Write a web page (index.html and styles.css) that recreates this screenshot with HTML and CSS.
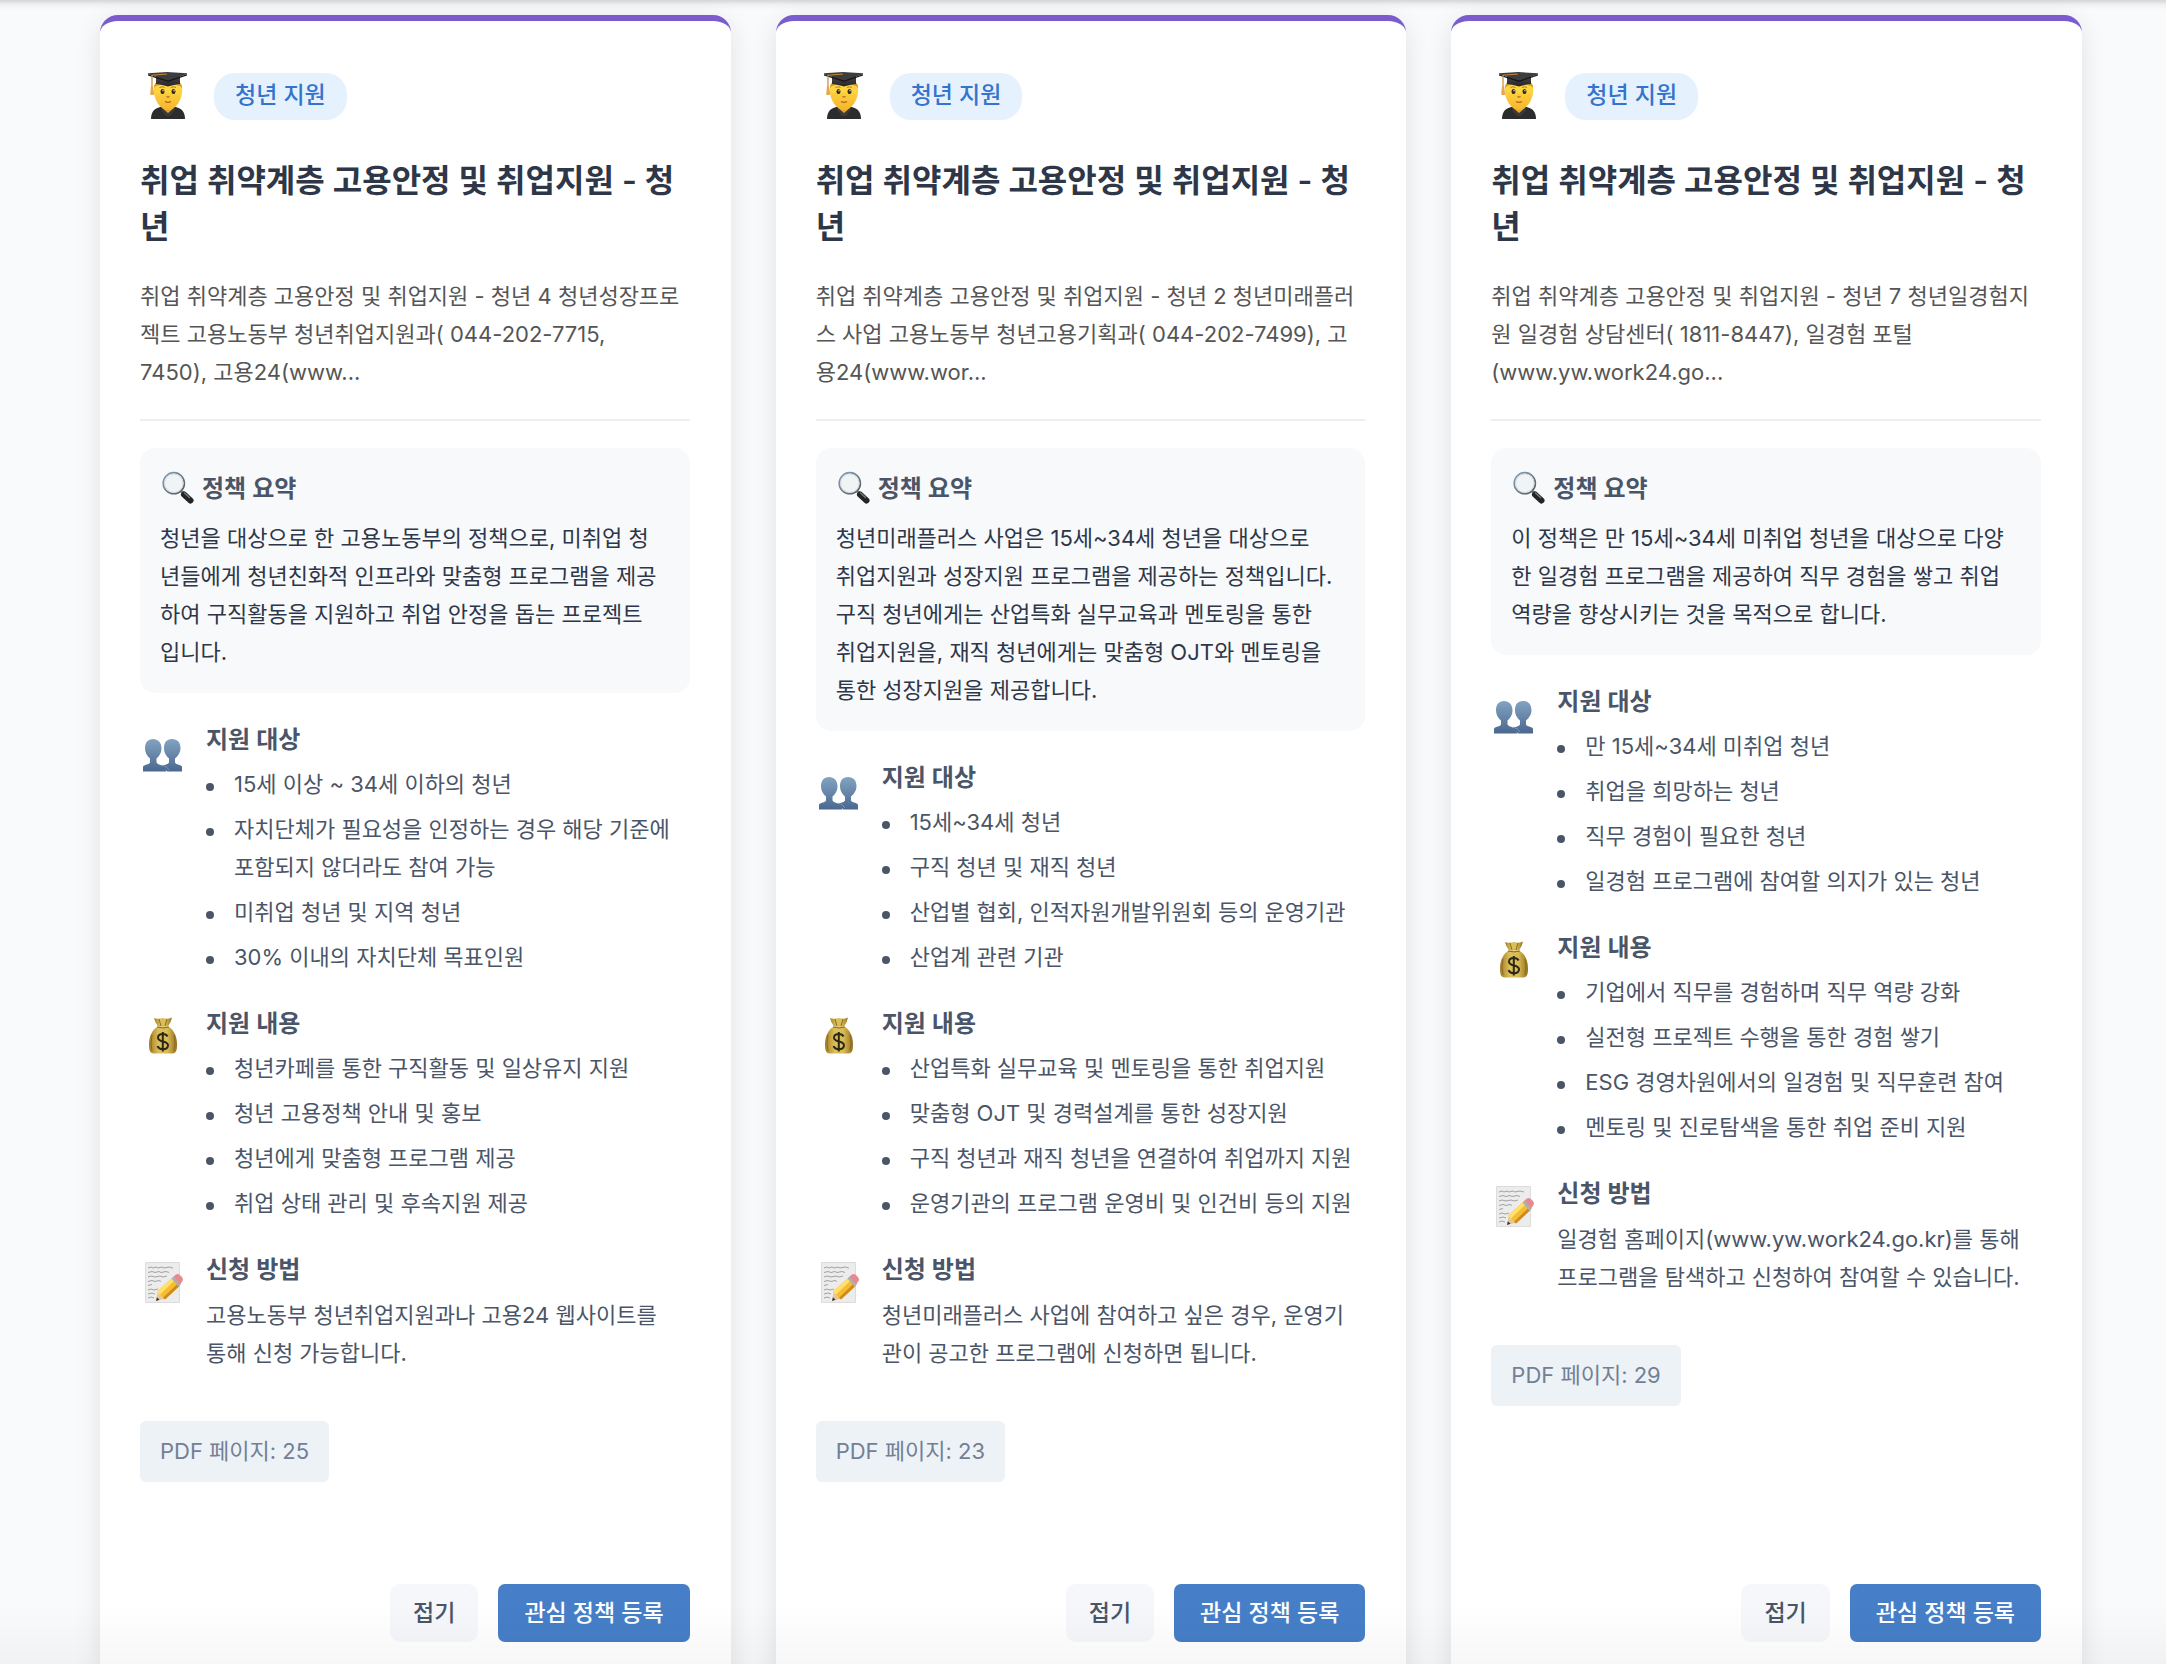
FILE: index.html
```html
<!DOCTYPE html>
<html lang="ko">
<head>
<meta charset="utf-8">
<meta name="viewport" content="width=device-width, initial-scale=1">
<title>청년 지원 정책</title>
<link rel="stylesheet" href="styles.css">
</head>
<body>
<svg class="sprite" width="0" height="0" aria-hidden="true">
  <defs>
    <linearGradient id="face" x1="0" y1="0" x2="0" y2="1"><stop offset="0" stop-color="#ffdb45"/><stop offset="1" stop-color="#f6b52c"/></linearGradient>
    <linearGradient id="cap" x1="0" y1="0" x2="0" y2="1"><stop offset="0" stop-color="#4a4a4c"/><stop offset="1" stop-color="#252527"/></linearGradient>
    <linearGradient id="people" x1="0" y1="0" x2="0" y2="1"><stop offset="0" stop-color="#83a3c2"/><stop offset="1" stop-color="#4a688f"/></linearGradient>
    <linearGradient id="bag"><stop offset="0" stop-color="#a37d25"/><stop offset=".35" stop-color="#dcc05a"/><stop offset=".65" stop-color="#d9bc55"/><stop offset="1" stop-color="#94701f"/></linearGradient>
    <linearGradient id="rim" x1="0" y1="0" x2="1" y2="1"><stop offset="0" stop-color="#86a3bd"/><stop offset="1" stop-color="#54565a"/></linearGradient>
    <symbol id="i-grad" viewBox="1 6 53 60">
      <path d="M12 59c0-8 4-11 11-12.500h12c7 1.500 11 4.500 11 12.500z" fill="#2c2c2e"/>
      <path d="M23 45h12v3l-6 6-6-6z" fill="#e5a429"/>
      <path d="M23 48l6 5 6-5 1 2-5 6h-4l-5-6z" fill="#3b3b3d"/>
      <path d="M15 25h28c.5 6 0 11-2 15-2 5-7 10-12 10s-10-5-12-10c-2-4-2.500-9-2-15z" fill="url(#face)"/>
      <path d="M15 28c0-3 1-5 3-6h22c2 1 3 3 3 6l-2-2-4-1-8-1-8 1-4 1z" fill="#d2982a"/>
      <path d="M17 28l4-3 8-1 8 1 4 3v5H17z" fill="#ffd63f"/>
      <ellipse cx="23.500" cy="31.500" rx="2" ry="2.600" fill="#332414"/><ellipse cx="34.500" cy="31.500" rx="2" ry="2.600" fill="#332414"/>
      <circle cx="24" cy="30.700" r=".7" fill="#fff"/><circle cx="35" cy="30.700" r=".7" fill="#fff"/>
      <path d="M20.500 27.500q3-1.500 5 0M32 27.500q3-1.500 5 0" fill="none" stroke="#ad7416" stroke-width=".9"/>
      <path d="M27.500 36.500q1.500 1 3 0M26 41.500q3 1.800 6 0" fill="none" stroke="#b6601d" stroke-width="1.200"/>
      <path d="M17 15h24v9q-4 0-12 2.500-8-2.500-12-2.500z" fill="url(#cap)"/>
      <path d="M9 13.300l19-1.300 20 1.300v1L29 20.500 9 14.300z" fill="#3d3d40"/>
      <path d="M9 14.300l20 6.200 19-6.200v1.200L29 22 9 15.400z" fill="#19191b"/>
      <path d="M28 14l-15 1.200v14" fill="none" stroke="#c58a35" stroke-width="1.200"/>
      <path d="M12 26h2l1.200 8.500q-2 1-4 0z" fill="#e1a751"/>
    </symbol>
    <symbol id="i-search" viewBox="25 10 36 36">
      <path d="M46 30l3 3" stroke="#8a8c90" stroke-width="3"/>
      <path d="M49 33.500l6.500 6" stroke="#242426" stroke-width="6" stroke-linecap="round"/>
      <path d="M49.500 32l5 4.500" stroke="#76787c" stroke-width="1.500" stroke-linecap="round"/>
      <circle cx="38.800" cy="22.200" r="10.600" fill="#f1f4f5" stroke="url(#rim)" stroke-width="1.600"/>
      <circle cx="38.800" cy="22.200" r="9.300" fill="none" stroke="#d3d8db" stroke-width="1"/>
    </symbol>
    <symbol id="i-people" viewBox="5 -5 45 60">
      <path d="M8 46.500v-5c2-2.500 6-1.500 7-4v-4c-3-2.500-5-6-5-10 0-6 3-9.500 8-9.500s8.500 3.500 8.500 9.500c0 4-2 7.500-5 10v4c1.500 2.500 5.500 2 8 5l2 4z" fill="url(#people)"/>
      <path d="M47 46.500v-5c-2-2.500-6-1.500-7-4v-4c3-2.500 5.500-6 5.500-10 0-6-3-9.500-8.500-9.500s-8 3.500-8 9.500c0 4 2 7.500 5 10v4c-1.500 2.500-5.500 2-7.500 4l6 5z" fill="url(#people)"/>
      <path d="M27 40q5 1 7 5" fill="none" stroke="#7b99bd" stroke-width=".9"/>
    </symbol>
    <symbol id="i-bag" viewBox="5 -1 45 60">
      <path d="M19 13q3 1.500 9 0 6 1.500 9-.5-1 5-4 9h-10q-3-4-4-8.500z" fill="url(#bag)"/>
      <path d="M23 21.500h10c6 3 9 10 9 18 0 6-1 9-5 9H19c-4 0-5-3-5-9 0-8 3-15 9-18z" fill="url(#bag)"/>
      <path d="M22 22q6 1.800 12 0M24 14l2 7M32 14l-2 7M17 30q-2 8 0 16M39 30q2 8 0 16" fill="none" stroke="#8a6a22" stroke-width="1"/>
      <path d="M32.500 31.500c-.8-1.800-2.500-2.500-4.700-2.500-2.800 0-4.800 1.300-4.800 3.700 0 5 10 2.500 10 7.500 0 2.500-2.200 4-5.200 4-2.600 0-4.500-1-5.300-3M27.800 27v19.500" fill="none" stroke="#2c2818" stroke-width="2"/>
    </symbol>
    <symbol id="i-memo" viewBox="5 0 45 60">
      <path d="M10.500 12.500h34v40h-34z" fill="#ececec" stroke="#d6d6d6" stroke-width=".8"/>
      <path d="M13 18l3-1 2 1 3-1 2 1 4-1 2 1 5-1 4 1M13 22.500l4-1 3 1 4-1 2 1 5-1 3 1M13 27l3-1 4 1 5-1 3 1 4-1M13 31.500l4-1 3 1 4-1 2 1M13 35.500l4-1M13 40l3-1 3 1 4-1M13 44l4-1 3 1M13 48l3-1 3 1" fill="none" stroke="#999" stroke-width=".9"/>
      <path d="M21 51l2-10.500 8 8z" fill="#e7c79a"/>
      <path d="M21 51l.9-3.800 2.600 2.600z" fill="#333"/>
      <path d="M22 41.500l15.500-14 7 8.500-14.500 13.500z" fill="#f6bd32"/>
      <path d="M22 41.500l15.500-14 2.300 2.800-15 14.500z" fill="#ffe06a"/>
      <path d="M28 47.800l14.500-14 2 2.200-14.500 13.500z" fill="#cf8a1e"/>
      <path d="M36.500 28.500l2.500-2.200 7 8-2.500 2.500z" fill="#aab0b6"/>
      <path d="M38.500 26.500l2.500-2q2-1.500 5 1.500t1.500 5l-2.500 3.500z" fill="#e58b8f"/>
    </symbol>
  </defs>
</svg>

<div class="scroller">
  <main class="policy-grid">

    <article class="card">
      <header class="card-head">
        <svg class="icon-grad" aria-hidden="true"><use href="#i-grad"/></svg>
        <span class="tag">청년 지원</span>
      </header>
      <h2 class="title">취업 취약계층 고용안정 및 취업지원 - 청년</h2>
      <p class="desc">취업 취약계층 고용안정 및 취업지원 - 청년 4 청년성장프로<br>젝트 고용노동부 청년취업지원과( 044-202-7715,<br>7450), 고용24(www...</p>
      <div class="detail">
        <section class="summary">
          <h3 class="heading summary-heading"><svg class="icon-search" aria-hidden="true"><use href="#i-search"/></svg>정책 요약</h3>
          <p class="summary-text">청년을 대상으로 한 고용노동부의 정책으로, 미취업 청<br>년들에게 청년친화적 인프라와 맞춤형 프로그램을 제공<br>하여 구직활동을 지원하고 취업 안정을 돕는 프로젝트<br>입니다.</p>
        </section>
        <section class="info">
          <svg class="icon-info" aria-hidden="true"><use href="#i-people"/></svg>
          <div class="info-body">
            <h3 class="heading">지원 대상</h3>
            <ul class="list">
              <li>15세 이상 ~ 34세 이하의 청년</li>
              <li>자치단체가 필요성을 인정하는 경우 해당 기준에 포함되지 않더라도 참여 가능</li>
              <li>미취업 청년 및 지역 청년</li>
              <li>30% 이내의 자치단체 목표인원</li>
            </ul>
          </div>
        </section>
        <section class="info">
          <svg class="icon-info" aria-hidden="true"><use href="#i-bag"/></svg>
          <div class="info-body">
            <h3 class="heading">지원 내용</h3>
            <ul class="list">
              <li>청년카페를 통한 구직활동 및 일상유지 지원</li>
              <li>청년 고용정책 안내 및 홍보</li>
              <li>청년에게 맞춤형 프로그램 제공</li>
              <li>취업 상태 관리 및 후속지원 제공</li>
            </ul>
          </div>
        </section>
        <section class="info">
          <svg class="icon-info" aria-hidden="true"><use href="#i-memo"/></svg>
          <div class="info-body">
            <h3 class="heading">신청 방법</h3>
            <p class="method">고용노동부 청년취업지원과나 고용24 웹사이트를<br>통해 신청 가능합니다.</p>
          </div>
        </section>
        <span class="page-ref">PDF 페이지: 25</span>
      </div>
      <footer class="actions">
        <button class="btn btn-fold" type="button">접기</button>
        <button class="btn btn-save" type="button">관심 정책 등록</button>
      </footer>
    </article>

    <article class="card">
      <header class="card-head">
        <svg class="icon-grad" aria-hidden="true"><use href="#i-grad"/></svg>
        <span class="tag">청년 지원</span>
      </header>
      <h2 class="title">취업 취약계층 고용안정 및 취업지원 - 청년</h2>
      <p class="desc">취업 취약계층 고용안정 및 취업지원 - 청년 2 청년미래플러<br>스 사업 고용노동부 청년고용기획과( 044-202-7499), 고<br>용24(www.wor...</p>
      <div class="detail">
        <section class="summary">
          <h3 class="heading summary-heading"><svg class="icon-search" aria-hidden="true"><use href="#i-search"/></svg>정책 요약</h3>
          <p class="summary-text">청년미래플러스 사업은 15세~34세 청년을 대상으로<br>취업지원과 성장지원 프로그램을 제공하는 정책입니다.<br>구직 청년에게는 산업특화 실무교육과 멘토링을 통한<br>취업지원을, 재직 청년에게는 맞춤형 OJT와 멘토링을<br>통한 성장지원을 제공합니다.</p>
        </section>
        <section class="info">
          <svg class="icon-info" aria-hidden="true"><use href="#i-people"/></svg>
          <div class="info-body">
            <h3 class="heading">지원 대상</h3>
            <ul class="list">
              <li>15세~34세 청년</li>
              <li>구직 청년 및 재직 청년</li>
              <li>산업별 협회, 인적자원개발위원회 등의 운영기관</li>
              <li>산업계 관련 기관</li>
            </ul>
          </div>
        </section>
        <section class="info">
          <svg class="icon-info" aria-hidden="true"><use href="#i-bag"/></svg>
          <div class="info-body">
            <h3 class="heading">지원 내용</h3>
            <ul class="list">
              <li>산업특화 실무교육 및 멘토링을 통한 취업지원</li>
              <li>맞춤형 OJT 및 경력설계를 통한 성장지원</li>
              <li>구직 청년과 재직 청년을 연결하여 취업까지 지원</li>
              <li>운영기관의 프로그램 운영비 및 인건비 등의 지원</li>
            </ul>
          </div>
        </section>
        <section class="info">
          <svg class="icon-info" aria-hidden="true"><use href="#i-memo"/></svg>
          <div class="info-body">
            <h3 class="heading">신청 방법</h3>
            <p class="method">청년미래플러스 사업에 참여하고 싶은 경우, 운영기<br>관이 공고한 프로그램에 신청하면 됩니다.</p>
          </div>
        </section>
        <span class="page-ref">PDF 페이지: 23</span>
      </div>
      <footer class="actions">
        <button class="btn btn-fold" type="button">접기</button>
        <button class="btn btn-save" type="button">관심 정책 등록</button>
      </footer>
    </article>

    <article class="card">
      <header class="card-head">
        <svg class="icon-grad" aria-hidden="true"><use href="#i-grad"/></svg>
        <span class="tag">청년 지원</span>
      </header>
      <h2 class="title">취업 취약계층 고용안정 및 취업지원 - 청년</h2>
      <p class="desc">취업 취약계층 고용안정 및 취업지원 - 청년 7 청년일경험지<br>원 일경험 상담센터( 1811-8447), 일경험 포털<br>(www.yw.work24.go...</p>
      <div class="detail">
        <section class="summary">
          <h3 class="heading summary-heading"><svg class="icon-search" aria-hidden="true"><use href="#i-search"/></svg>정책 요약</h3>
          <p class="summary-text">이 정책은 만 15세~34세 미취업 청년을 대상으로 다양<br>한 일경험 프로그램을 제공하여 직무 경험을 쌓고 취업<br>역량을 향상시키는 것을 목적으로 합니다.</p>
        </section>
        <section class="info">
          <svg class="icon-info" aria-hidden="true"><use href="#i-people"/></svg>
          <div class="info-body">
            <h3 class="heading">지원 대상</h3>
            <ul class="list">
              <li>만 15세~34세 미취업 청년</li>
              <li>취업을 희망하는 청년</li>
              <li>직무 경험이 필요한 청년</li>
              <li>일경험 프로그램에 참여할 의지가 있는 청년</li>
            </ul>
          </div>
        </section>
        <section class="info">
          <svg class="icon-info" aria-hidden="true"><use href="#i-bag"/></svg>
          <div class="info-body">
            <h3 class="heading">지원 내용</h3>
            <ul class="list">
              <li>기업에서 직무를 경험하며 직무 역량 강화</li>
              <li>실전형 프로젝트 수행을 통한 경험 쌓기</li>
              <li>ESG 경영차원에서의 일경험 및 직무훈련 참여</li>
              <li>멘토링 및 진로탐색을 통한 취업 준비 지원</li>
            </ul>
          </div>
        </section>
        <section class="info">
          <svg class="icon-info" aria-hidden="true"><use href="#i-memo"/></svg>
          <div class="info-body">
            <h3 class="heading">신청 방법</h3>
            <p class="method">일경험 홈페이지(www.yw.work24.go.kr)를 통해<br>프로그램을 탐색하고 신청하여 참여할 수 있습니다.</p>
          </div>
        </section>
        <span class="page-ref">PDF 페이지: 29</span>
      </div>
      <footer class="actions">
        <button class="btn btn-fold" type="button">접기</button>
        <button class="btn btn-save" type="button">관심 정책 등록</button>
      </footer>
    </article>

  </main>
</div>
</body>
</html>
```
FILE: styles.css
```css
* {
  box-sizing: border-box;
}

body {
  margin: 0;
  background: #f8fafc;
  color: #4a5568;
  font-family: Inter, "Noto Sans CJK KR", sans-serif;
  font-size: 22px;
  line-height: 38px;
}

h2, h3, p, ul {
  margin: 0;
  padding: 0;
}

.sprite {
  position: absolute;
}

/* Scroll area; the edge shades are painted over its content */
.scroller {
  height: 100vh;
  overflow-y: auto;
  scrollbar-width: none;
}

.scroller::before,
.scroller::after {
  content: "";
  position: fixed;
  left: 0;
  right: 0;
  pointer-events: none;
}

.scroller::before {
  top: 0;
  height: 10px;
  background: linear-gradient(rgba(0, 0, 0, .14), rgba(0, 0, 0, .03) 50%, rgba(0, 0, 0, 0));
}

.scroller::after {
  bottom: 0;
  height: 60px;
  background: linear-gradient(rgba(0, 0, 0, 0), rgba(0, 0, 0, .03));
}

.policy-grid {
  display: grid;
  grid-template-columns: repeat(3, minmax(0, 1fr));
  gap: 45px;
  padding: 15px 84px 45px 100px;
}

.card {
  display: flex;
  flex-direction: column;
  padding: 45px 41px 41px 40px;
  border-top: 6px solid #7a5ccf;
  border-radius: 18px;
  background: #fff;
  box-shadow: 0 6px 26px rgba(0, 0, 0, .1);
}

.card-head {
  display: flex;
  align-items: center;
  gap: 21px;
  margin-bottom: 32px;
}

.icon-grad {
  width: 53px;
  height: 60px;
}

.tag {
  padding: 3px 21px 6px;
  border-radius: 21px;
  background: #e5f2fd;
  color: #3573ce;
  font-size: 23px;
  font-weight: 500;
}

.title {
  margin-bottom: 27px;
  color: #2d3748;
  font-size: 32px;
  font-weight: 600;
  line-height: 46px;
}

.desc {
  color: #555;
}

.detail {
  margin-top: 28px;
  padding-top: 27px;
  border-top: 2px solid #eee;
}

.summary {
  margin-bottom: 27px;
  padding: 22px 20px 22px;
  border-radius: 15px;
  background: #f8f9fb;
}

.heading {
  margin-bottom: 6px;
  padding-top: 1px;
  font-size: 24px;
  font-weight: 600;
}

.summary-heading {
  display: flex;
  align-items: center;
  gap: 6px;
  margin-bottom: 11px;
  padding-top: 0;
}

.icon-search {
  width: 36px;
  height: 36px;
}

.summary-text {
  color: #2d3748;
}

.info {
  display: flex;
  gap: 21px;
  margin-bottom: 28px;
}

.icon-info {
  flex: none;
  width: 45px;
  height: 60px;
}

.info-body {
  flex: 1;
  min-width: 0;
}

.list {
  display: grid;
  gap: 7px;
  list-style: none;
}

.list li {
  display: flex;
  gap: 20px;
}

.list li::before {
  content: "";
  flex: none;
  width: 8px;
  height: 8px;
  margin-top: 18px;
  border-radius: 50%;
  background: #4a5568;
}

.method {
  padding-top: 1px;
}

.page-ref {
  display: inline-block;
  margin-top: 21px;
  padding: 11px 20px 12px;
  border-radius: 6px;
  background: #edf2f7;
  color: #718096;
}

.actions {
  display: flex;
  justify-content: flex-end;
  gap: 20px;
  margin-top: auto;
  padding-top: 102px;
}

.btn {
  padding: 10px 23px;
  border: 0;
  border-radius: 10px;
  font: inherit;
  font-size: 23px;
  font-weight: 500;
  cursor: pointer;
}

.btn-fold {
  background: #f5f7fb;
  color: #4a5568;
}

.btn-save {
  padding: 10px 26px;
  border-radius: 7px;
  background: #467fc8;
  color: #fff;
}
```
